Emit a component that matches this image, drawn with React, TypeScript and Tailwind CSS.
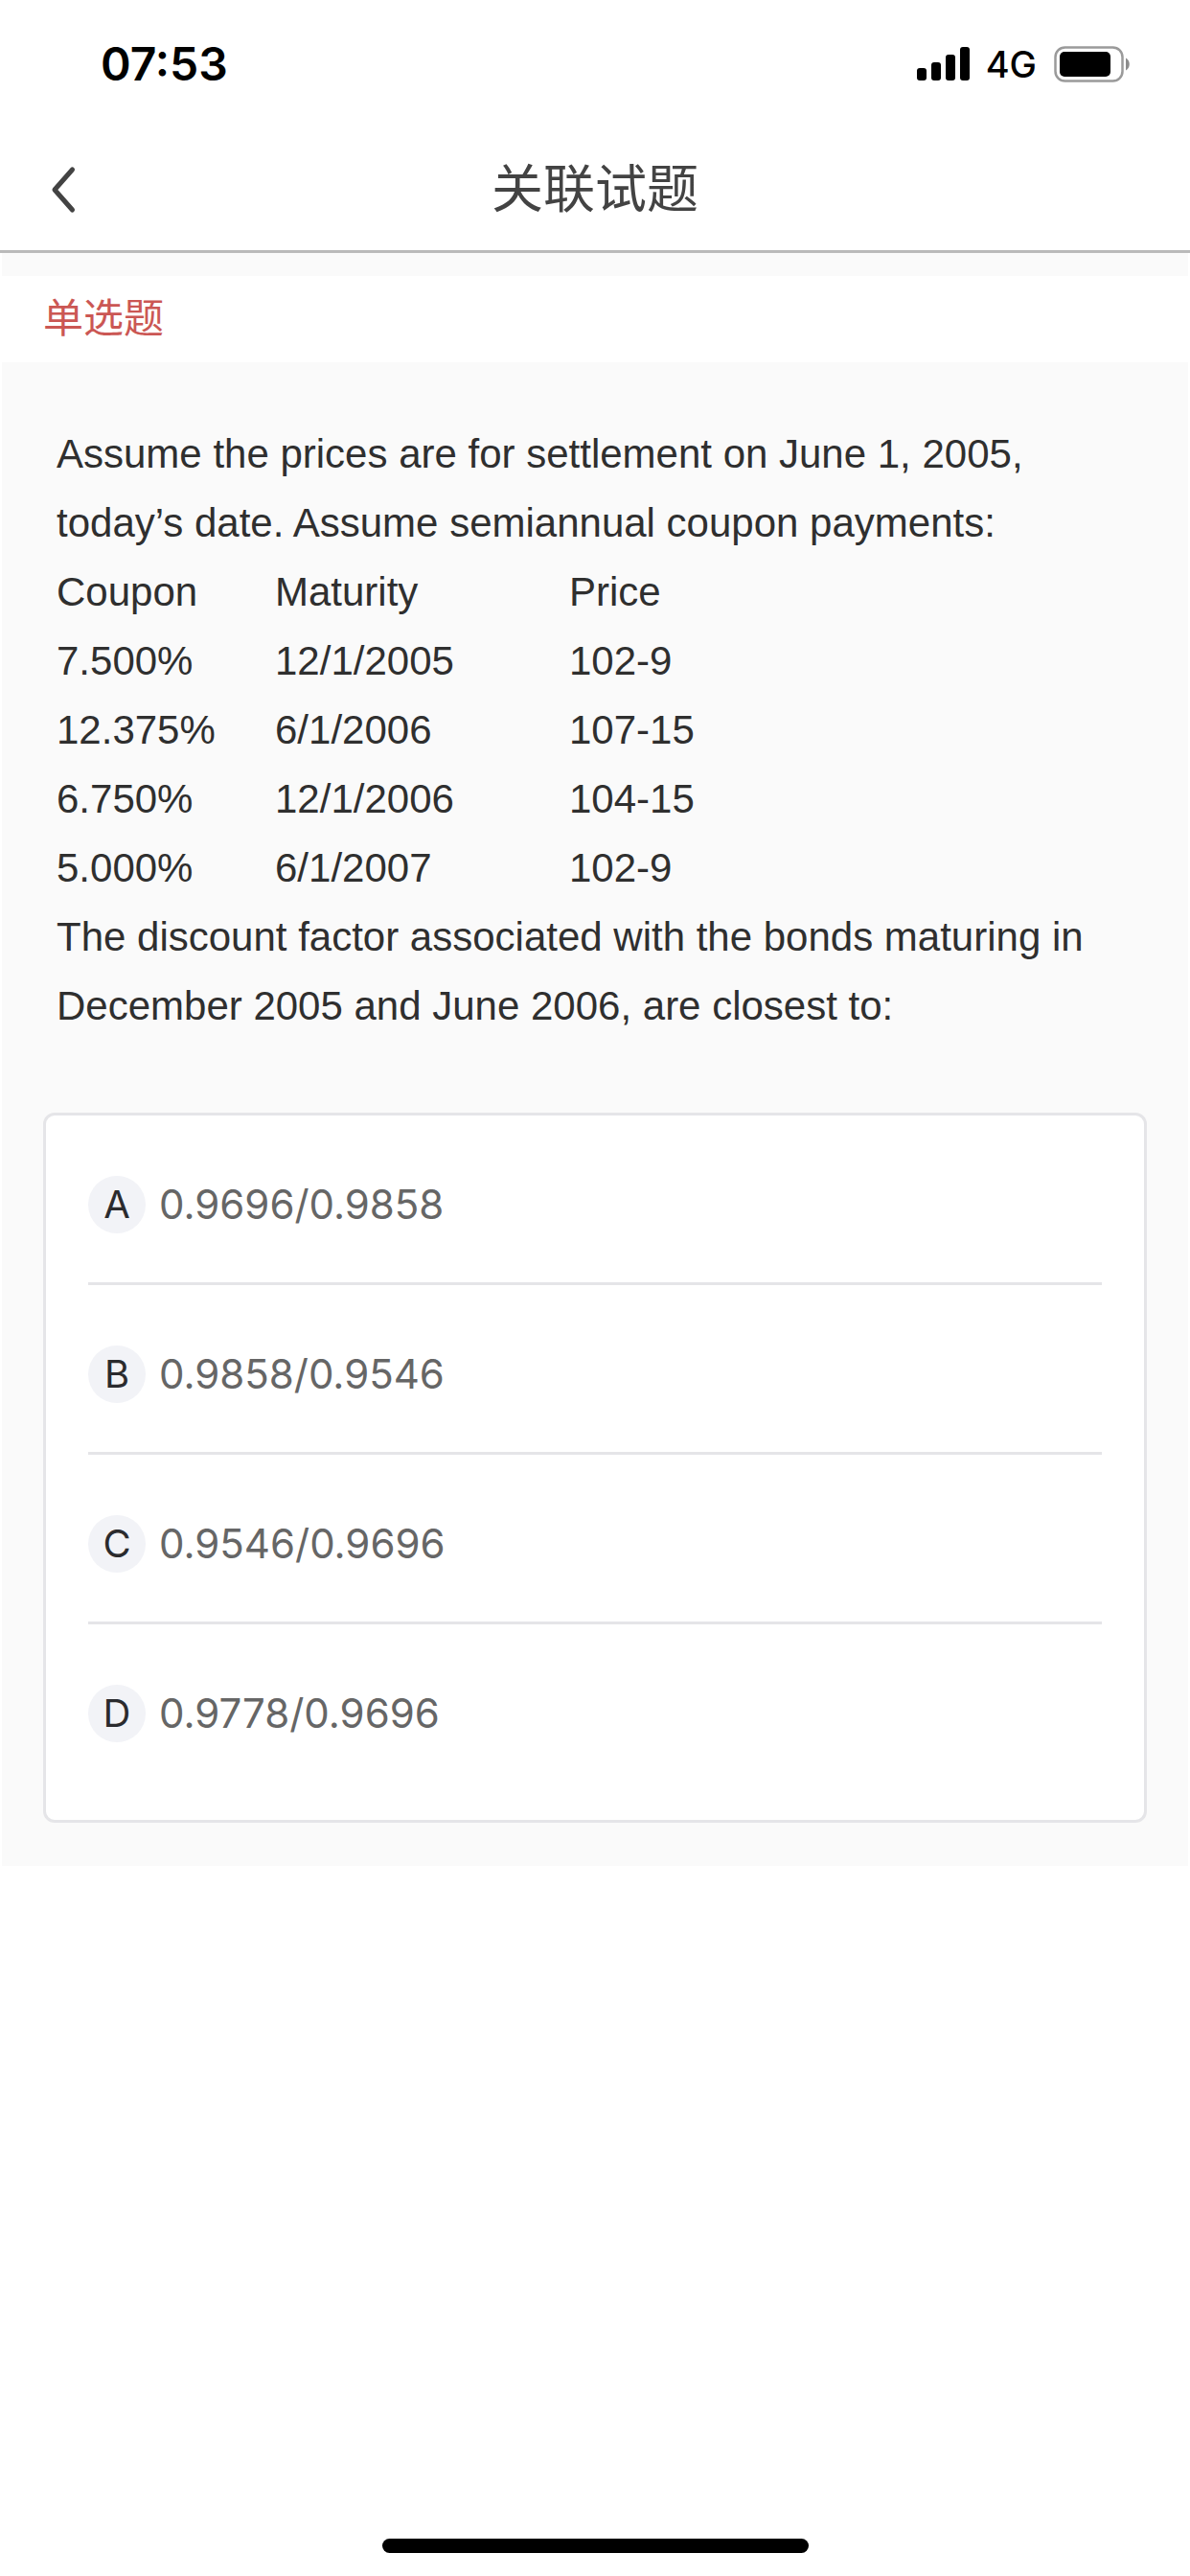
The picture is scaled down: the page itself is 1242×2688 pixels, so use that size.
import { useState } from "react";

const bonds = [
  { coupon: "7.500%", maturity: "12/1/2005", price: "102-9" },
  { coupon: "12.375%", maturity: "6/1/2006", price: "107-15" },
  { coupon: "6.750%", maturity: "12/1/2006", price: "104-15" },
  { coupon: "5.000%", maturity: "6/1/2007", price: "102-9" },
];

const options = [
  { key: "A", text: "0.9696/0.9858" },
  { key: "B", text: "0.9858/0.9546" },
  { key: "C", text: "0.9546/0.9696" },
  { key: "D", text: "0.9778/0.9696" },
];

function StatusBar() {
  return (
    <div className="flex h-[134px] items-center justify-between pl-[105px] pr-[62px] font-['Inter',sans-serif] text-black">
      <span className="text-[48px] leading-none font-semibold">07:53</span>
      <div className="flex items-center">
        {/* Signal */}
        <svg width="56" height="36" viewBox="0 0 56 36" aria-hidden="true">
          <rect x="0" y="22" width="10" height="13" rx="3" />
          <rect x="15" y="16" width="10" height="19" rx="3" />
          <rect x="30" y="8" width="10" height="27" rx="3" />
          <rect x="45" y="0" width="10" height="35" rx="3" />
        </svg>
        <span className="ml-4 text-[38px] leading-none font-medium">4G</span>
        {/* Battery */}
        <svg className="ml-[18px]" width="80" height="38" viewBox="0 0 80 38" aria-hidden="true">
          <rect x="1.5" y="1.5" width="70" height="35" rx="10" fill="none" stroke="#9a9a9a" strokeWidth="2.5" />
          <rect x="6" y="6" width="53" height="26" rx="5" />
          <path d="M75 12.5c5 2.5 5 10.5 0 13z" fill="#8c8c8c" />
        </svg>
      </div>
    </div>
  );
}

export default function App() {
  const [selected, setSelected] = useState<string | null>(null);

  return (
    <div className="flex min-h-screen flex-col bg-white font-['Liberation_Sans','Noto_Sans_CJK_SC',sans-serif]">
      <StatusBar />

      {/* Nav bar */}
      <header className="grid h-[130px] grid-cols-[1fr_auto_1fr] items-center border-b-3 border-[#bababa] px-12">
        <button type="button" aria-label="返回" className="w-10">
          <svg width="40" height="56" viewBox="0 0 40 56" fill="none" stroke="#434343" strokeWidth="5" strokeLinecap="round" strokeLinejoin="round">
            <path d="M27.5 7L9 28L27.5 49" />
          </svg>
        </button>
        <h1 className="text-[54px] leading-none text-[#434343]">关联试题</h1>
      </header>

      <main>
        <div className="mx-0.5 h-6 bg-[#fafafa]" />
        <h2 className="px-[45px] text-[42px] leading-[90px] text-[#cb5754]">单选题</h2>

        <div className="mx-0.5 bg-[#fafafa] px-[43px] pt-[60px] pb-[45px]">
          {/* Question */}
          <div className="px-3.5 text-[42px] leading-[72px] text-[#2f2f2f]">
            <p>Assume the prices are for settlement on June 1, 2005, today’s date. Assume semiannual coupon payments:</p>
            <table className="text-left">
              <thead>
                <tr>
                  <th className="w-[228px] p-0 font-normal">Coupon</th>
                  <th className="w-[307px] p-0 font-normal">Maturity</th>
                  <th className="p-0 font-normal">Price</th>
                </tr>
              </thead>
              <tbody>
                {bonds.map((bond) => (
                  <tr key={bond.maturity}>
                    <td className="p-0">{bond.coupon}</td>
                    <td className="p-0">{bond.maturity}</td>
                    <td className="p-0">{bond.price}</td>
                  </tr>
                ))}
              </tbody>
            </table>
            <p>The discount factor associated with the bonds maturing in December 2005 and June 2006, are closest to:</p>
          </div>

          {/* Options */}
          <ul className="mt-[75px] rounded-xl border-3 border-[#e5e5e8] bg-white px-11 pb-[30px] font-['Inter',sans-serif]">
            {options.map((option) => (
              <li key={option.key} className="border-b-3 border-[#e5e5e8] last:border-b-0">
                <button
                  type="button"
                  aria-pressed={selected === option.key}
                  onClick={() => setSelected(option.key)}
                  className="flex w-full items-center gap-3.5 pt-[63px] pb-[51px] leading-[60px]"
                >
                  <span className="size-[60px] rounded-full bg-[#f2f3f7] text-center text-[40px] text-[#2b2b2e]">{option.key}</span>
                  <span className="text-[42px] text-[#666]">{option.text}</span>
                </button>
              </li>
            ))}
          </ul>
        </div>
      </main>

      {/* Home indicator */}
      <div className="mx-auto mt-auto mb-6 h-[15px] w-[445px] rounded-full bg-black" />
    </div>
  );
}
